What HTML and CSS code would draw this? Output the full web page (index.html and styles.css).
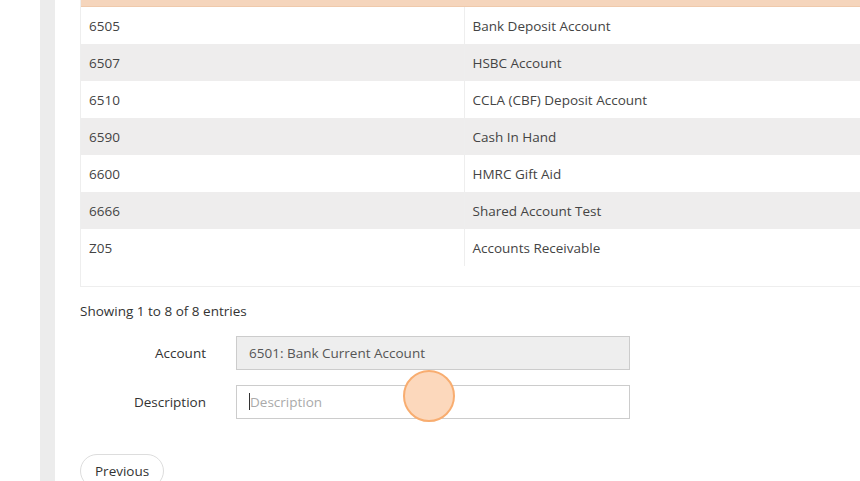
FILE: index.html
```html
<!DOCTYPE html>
<html lang="en">
<head>
    <meta charset="UTF-8">
    <title>Accounts</title>
    <link rel="stylesheet" href="styles.css">
</head>
<body>
    <div class="gutter"></div>
    <div class="strip"></div>
    <div class="main">
        <div class="table-wrap">
            <table class="accounts">
                <thead>
                    <tr><th></th><th></th></tr>
                </thead>
                <tbody>
                    <tr><td>6505</td><td>Bank Deposit Account</td></tr>
                    <tr><td>6507</td><td>HSBC Account</td></tr>
                    <tr><td>6510</td><td>CCLA (CBF) Deposit Account</td></tr>
                    <tr><td>6590</td><td>Cash In Hand</td></tr>
                    <tr><td>6600</td><td>HMRC Gift Aid</td></tr>
                    <tr><td>6666</td><td>Shared Account Test</td></tr>
                    <tr><td>Z05</td><td>Accounts Receivable</td></tr>
                </tbody>
            </table>
        </div>

        <div class="info">Showing 1 to 8 of 8 entries</div>

        <div class="form">
            <div class="form-row">
                <label>Account</label>
                <div class="input readonly">6501: Bank Current Account</div>
            </div>
            <div class="form-row">
                <label>Description</label>
                <div class="input"><span class="caret"></span><span class="placeholder">Description</span></div>
            </div>
        </div>

        <button class="btn">Previous</button>
    </div>

    <div class="click-marker"></div>
</body>
</html>
```

FILE: styles.css
```css
html, body {
    margin: 0;
    height: 100%;
    overflow: hidden;
}

body {
    display: flex;
    background-color: #fff;
    font-family: "Open Sans", "Liberation Sans", sans-serif;
    font-size: 13.5px;
    color: #444;
}

.gutter {
    width: 40px;
    flex-shrink: 0;
}

.strip {
    width: 15px;
    flex-shrink: 0;
    background-color: #ececec;
}

.main {
    padding-left: 25px;
    width: 900px;
    flex-shrink: 0;
}

.table-wrap {
    margin-top: -31px;
    border: 1px solid #eeeeee;
    border-top: none;
    padding-bottom: 20px;
}

.accounts {
    width: 100%;
    border-collapse: collapse;
}

.accounts th {
    height: 37px;
    background-color: #f5d5bc;
    border-bottom: 1px solid #efc9ab;
    padding: 0 8px;
}

.accounts td {
    height: 37px;
    padding: 2px 8px 0;
    box-sizing: border-box;
}

.accounts td:first-child {
    width: 383px;
    border-right: 1px solid #eeeeee;
}

.accounts tbody tr:nth-child(even) td {
    background-color: #eeeded;
}

.info {
    margin-top: 14px;
    height: 20px;
    line-height: 20px;
    color: #333;
}

.form {
    margin-top: 15px;
}

.form-row {
    display: flex;
    align-items: center;
    margin-bottom: 15px;
}

.form-row label {
    width: 126px;
    text-align: right;
    padding-right: 30px;
    color: #333;
}

.input {
    width: 394px;
    height: 34px;
    box-sizing: border-box;
    border: 1px solid #cccccc;
    padding: 0 12px;
    display: flex;
    align-items: center;
    background-color: #fff;
}

.input.readonly {
    background-color: #eeeeee;
    color: #555;
}

.caret {
    width: 1px;
    height: 17px;
    background-color: #333;
}

.placeholder {
    color: #aaa;
}

.btn {
    margin-top: 20px;
    height: 34px;
    padding: 0 14px;
    border: 1px solid #dddddd;
    border-radius: 17px;
    background-color: #fff;
    font-family: inherit;
    font-size: 13.5px;
    color: #333;
}

.click-marker {
    position: fixed;
    left: 403px;
    top: 370px;
    width: 52px;
    height: 52px;
    box-sizing: border-box;
    border: 2px solid #f8ad70;
    border-radius: 50%;
    background-color: #fcd8bc;
}
```
